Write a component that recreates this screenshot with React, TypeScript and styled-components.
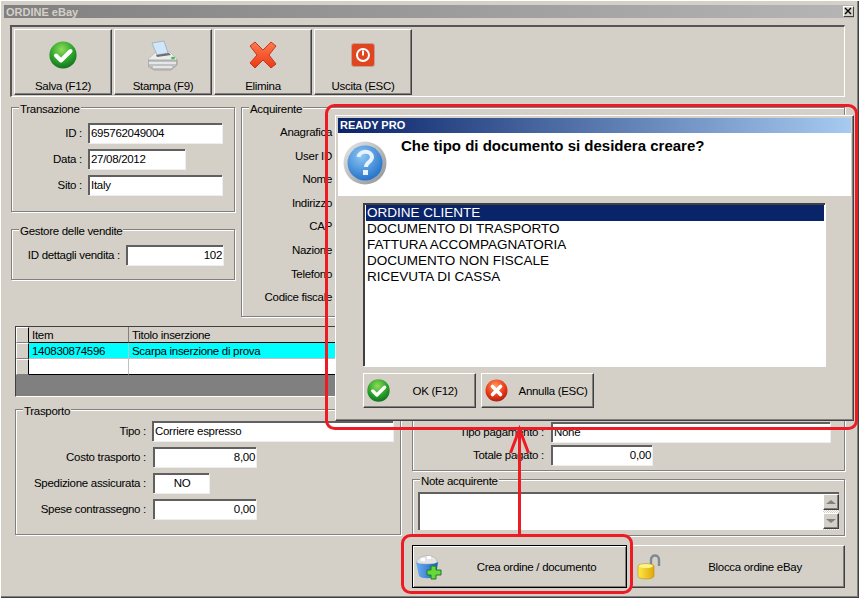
import React from 'react'
import styled, { createGlobalStyle } from 'styled-components'

const Global = createGlobalStyle`
  html, body { margin: 0; padding: 0; background: #d4d0c8; }
  * { box-sizing: border-box; }
`

const Window = styled.div`
  position: relative;
  width: 859px;
  height: 598px;
  overflow: hidden;
  padding: 5px 4px 0;
  background: #d4d0c8;
  color: #000;
  font-family: 'Liberation Sans', Arial, sans-serif;
  font-size: 11.5px;
  letter-spacing: -0.3px;
  box-shadow: inset 1px 1px 0 #fff, inset -1px -1px 0 #404040, inset -2px -2px 0 #808080;
`

const TitleBar = styled.div`
  display: flex;
  align-items: center;
  justify-content: space-between;
  height: 13px;
  width: 850px;
  padding: 0 1px 0 2px;
  background: linear-gradient(90deg, #808080, #b5b5b5);
  color: #d4d0c8;
  font-size: 11px;
  font-weight: bold;
  letter-spacing: 0;
`

const CloseBox = styled.div`
  display: flex;
  align-items: center;
  justify-content: center;
  width: 10px;
  height: 10px;
  margin-top: -2px;
  background: #d4d0c8;
  box-shadow: inset 1px 1px 0 #fff, 1px 1px 0 #404040;
`

const Body = styled.div`
  display: flex;
  flex-direction: column;
  width: 835px;
  margin: 7px 0 0 6px;
`

const Toolbar = styled.div`
  display: flex;
  gap: 2px;
  height: 72px;
  padding: 2px 2px 0 2px;
  border-top: 2px solid #555;
  border-left: 2px solid #555;
  border-right: 1px solid #fff;
  border-bottom: 1px solid #fff;
`

const raised = `
  background: #d4d0c8;
  border-top: 1px solid #fff;
  border-left: 1px solid #fff;
  border-right: 1px solid #404040;
  border-bottom: 1px solid #404040;
  box-shadow: inset -1px -1px 0 #808080;
`

const ToolButton = styled.div`
  ${raised}
  display: flex;
  flex-direction: column;
  align-items: center;
  width: 98px;
  height: 66px;
  padding-top: 9px;
  span { margin-top: 8px; line-height: 14px; }
`

const ToolIcon = styled.div`
  display: flex;
  align-items: center;
  justify-content: center;
  height: 32px;
`

const TopRow = styled.div`
  display: grid;
  grid-template-columns: 224px 1fr;
  gap: 6px;
  margin: 10px 0 0 1px;
`

const LeftStack = styled.div`
  display: flex;
  flex-direction: column;
  gap: 17px;
`

const Group = styled.div<{ $h: number }>`
  position: relative;
  display: flex;
  flex-direction: column;
  gap: 6px;
  height: ${p => p.$h}px;
  padding-top: 15px;
  border: 1px solid #808080;
  box-shadow: 1px 1px 0 #fff, inset 1px 1px 0 #fff;
`

const Legend = styled.span`
  position: absolute;
  top: -5px;
  left: 7px;
  padding: 0 1px;
  background: #d4d0c8;
  line-height: 12px;
`

const Row = styled.div<{ $up?: number }>`
  display: flex;
  align-items: center;
  height: 20px;
  margin-top: ${p => p.$up || 0}px;
`

const Label = styled.div<{ $w: number; $pad?: number }>`
  flex: none;
  width: ${p => p.$w}px;
  padding-right: ${p => p.$pad || 6}px;
  text-align: right;
  white-space: nowrap;
`

const Input = styled.div<{ $w: number; $align?: string }>`
  flex: none;
  width: ${p => p.$w}px;
  height: 20px;
  padding: 0 1px;
  line-height: 16px;
  text-align: ${p => p.$align || 'left'};
  background: #fff;
  border-top: 2px solid #606060;
  border-left: 2px solid #606060;
  box-shadow: 1px 1px 0 #eee;
`

const BuyerRows = styled.div`
  display: flex;
  flex-direction: column;
  gap: 9.6px;
  margin-top: 2px;
`

const BuyerLabel = styled.div`
  width: 90px;
  height: 14px;
  line-height: 14px;
  text-align: right;
  white-space: nowrap;
`

const DataGrid = styled.div`
  display: grid;
  grid-template-columns: 13px 100px 1fr;
  grid-auto-rows: 16px;
  height: 71px;
  margin: 9px 0 0 5px;
  border: 1px solid #404040;
  border-bottom-color: #fff;
  background: #808080;
`

const Cell = styled.div<{ $bg?: string; $line?: string }>`
  padding: 0 3px;
  line-height: 16px;
  background: ${p => p.$bg || '#fff'};
  border-right: 1px solid ${p => (p.$bg === '#d4d0c8' ? '#808080' : '#c0c0c0')};
  border-bottom: 1px solid ${p => p.$line || '#000'};
  white-space: nowrap;
`

const Indicator = styled.div`
  ${raised}
  border-right-color: #000;
  border-bottom-color: #808080;
  box-shadow: none;
`

const BottomRow = styled.div`
  display: grid;
  grid-template-columns: 386px 433px;
  gap: 11px;
  margin: 12px 0 0 5px;
`

const RightStack = styled.div`
  display: flex;
  flex-direction: column;
`

const PayGroup = styled(Group)`
  padding-top: 12px;
  gap: 3px;
`

const NoteGroup = styled(Group)`
  margin-top: 8px;
  padding: 12px 5px 0;
`

const NoteBox = styled.div`
  display: flex;
  justify-content: flex-end;
  height: 38px;
  background: #fff;
  border-top: 2px solid #606060;
  border-left: 2px solid #606060;
`

const Spin = styled.div`
  display: flex;
  flex-direction: column;
  justify-content: space-between;
  width: 16px;
  padding-bottom: 1px;
  background: repeating-conic-gradient(#d4d0c8 0 25%, #fff 0 50%) 0 0 / 2px 2px;
`

const SpinButton = styled.div`
  ${raised}
  display: flex;
  align-items: center;
  justify-content: center;
  height: 16px;
`

const Arrow = styled.div<{ $up?: boolean }>`
  width: 0;
  height: 0;
  border-left: 5px solid transparent;
  border-right: 5px solid transparent;
  ${p => (p.$up ? 'border-bottom: 4px solid #808080;' : 'border-top: 4px solid #808080;')}
`

const ActionRow = styled.div`
  display: flex;
  gap: 3px;
  margin-top: 9px;
`

const WideButton = styled.div<{ $pressed?: boolean }>`
  ${raised}
  ${p => (p.$pressed ? 'border: 1px solid #000; box-shadow: inset 1px 1px 0 #fff, inset -1px -1px 0 #808080;' : '')}
  display: flex;
  align-items: center;
  width: 215px;
  height: 43px;
  padding-left: ${p => (p.$pressed ? 3 : 6)}px;
  svg { flex: none; }
  span { flex: 1; padding-left: 5px; text-align: center; }
`

const Dialog = styled.div`
  position: absolute;
  left: 335px;
  top: 115px;
  width: 519px;
  height: 306px;
  padding: 2px;
  background: #d4d0c8;
  border-top: 1px solid #fff;
  border-left: 1px solid #fff;
  border-right: 1px solid #404040;
  border-bottom: 1px solid #404040;
  box-shadow: inset -1px -1px 0 #808080;
  z-index: 2;
`

const DialogTitle = styled.div`
  height: 15px;
  padding-left: 2px;
  line-height: 15px;
  color: #fff;
  font-size: 11px;
  font-weight: bold;
  letter-spacing: 0;
  background: linear-gradient(90deg, #0a246a, #a6caf0);
`

const DialogHead = styled.div`
  display: flex;
  align-items: flex-start;
  gap: 14px;
  height: 63px;
  padding: 8px 0 0 5px;
  background: #fff;
`

const DialogQuestion = styled.div`
  margin-top: -4px;
  font-size: 15px;
  font-weight: bold;
  letter-spacing: 0;
  line-height: 18px;
`

const DialogBody = styled.div`
  padding: 7px 28px 0 25px;
`

const ListBox = styled.div`
  width: 462px;
  height: 163px;
  padding: 0 1px;
  background: #fff;
  border-top: 2px solid #404040;
  border-left: 2px solid #404040;
  box-shadow: 1px 1px 0 #fff;
`

const ListItem = styled.div<{ $active?: boolean }>`
  height: 16px;
  padding-left: 1px;
  line-height: 16px;
  font-size: 13.5px;
  letter-spacing: 0;
  color: ${p => (p.$active ? '#fff' : '#000')};
  background: ${p => (p.$active ? '#0a246a' : 'transparent')};
`

const DialogActions = styled.div`
  display: flex;
  gap: 5px;
  margin-top: 7px;
`

const DialogButton = styled.div`
  ${raised}
  display: flex;
  align-items: center;
  width: 113px;
  height: 35px;
  padding-left: 3px;
  svg { flex: none; }
  span { flex: 1; padding-left: 5px; text-align: center; white-space: nowrap; }
`

const Marks = styled.svg`
  position: absolute;
  left: 0;
  top: 0;
  z-index: 3;
  pointer-events: none;
`

const CheckIcon = ({ size, id }: { size: number; id: string }) => (
  <svg width={size} height={size} viewBox="0 0 28 28">
    <defs>
      <radialGradient id={id} cx="45%" cy="30%" r="75%">
        <stop offset="0" stopColor="#8fdc5a" />
        <stop offset="0.55" stopColor="#2fa52c" />
        <stop offset="1" stopColor="#0c6a1e" />
      </radialGradient>
    </defs>
    <circle cx="14" cy="14" r="13.6" fill={`url(#${id})`} />
    <path d="M7 14.5l5 5 9.5-9.5" fill="none" stroke="#fff" strokeWidth="4" strokeLinecap="round" strokeLinejoin="round" />
  </svg>
)

const PrinterIcon = () => (
  <svg width="30" height="31" viewBox="0 0 30 31">
    <path d="M0 19L8 12H22L29 19V24H0z" fill="#ececec" stroke="#a8a8a8" strokeWidth=".6" />
    <path d="M4 3L16 1 20 13 9 15z" fill="#cfe6fb" stroke="#8ea6bc" strokeWidth=".7" />
    <path d="M8 15L21 13 23 15 9 17z" fill="#6e6e6e" />
    <path d="M0 20H29V25L23 30H6L0 26z" fill="#bfc1c3" stroke="#8a8a8a" strokeWidth=".6" />
    <path d="M1 23H28M5 27H24" stroke="#f2f2f2" strokeWidth="1.3" />
    <ellipse cx="25" cy="18" rx="2" ry="1.2" fill="#3fbf46" />
  </svg>
)

const CrossIcon = () => (
  <svg width="28" height="28" viewBox="0 0 28 28">
    <defs>
      <linearGradient id="crossFill" x1="0" y1="0" x2="0" y2="1">
        <stop offset="0" stopColor="#ff7a50" />
        <stop offset="1" stopColor="#ea3a14" />
      </linearGradient>
    </defs>
    <path d="M1 5L6 1 14 9 22 1 27 5 20 14 27 23 22 27 14 19 6 27 1 22 8 14z" fill="url(#crossFill)" stroke="#c22c10" strokeWidth=".9" strokeLinejoin="round" />
  </svg>
)

const PowerIcon = () => (
  <svg width="24" height="24" viewBox="0 0 24 24">
    <rect x=".5" y=".5" width="23" height="23" rx="2.500" fill="#e04522" stroke="#c9a090" />
    <circle cx="12" cy="12" r="6" fill="none" stroke="#fff" strokeWidth="2" />
    <path d="M12 7.500v5" stroke="#fff" strokeWidth="2" />
  </svg>
)

const CancelIcon = () => (
  <svg width="23" height="23" viewBox="0 0 23 23">
    <defs>
      <radialGradient id="cancelFill" cx="45%" cy="30%" r="75%">
        <stop offset="0" stopColor="#ff9a5a" />
        <stop offset="0.6" stopColor="#e8391a" />
        <stop offset="1" stopColor="#a81a08" />
      </radialGradient>
    </defs>
    <circle cx="11.5" cy="11.5" r="11" fill="url(#cancelFill)" />
    <path d="M7.500 7.500l8 8M15.500 7.500l-8 8" stroke="#fff" strokeWidth="3.6" strokeLinecap="round" />
  </svg>
)

const BasketIcon = () => (
  <svg width="26" height="26" viewBox="0 0 26 26">
    <defs>
      <linearGradient id="basketFill" x1="0" y1="0" x2="1" y2="0">
        <stop offset="0" stopColor="#6cb0f0" />
        <stop offset="1" stopColor="#1c5cc0" />
      </linearGradient>
    </defs>
    <path d="M1 7C2 1 19 -1 21 7L21 10H1z" fill="#e4e4e4" stroke="#a8a8a8" strokeWidth=".6" />
    <path d="M5 4h4v3H5zM11 2h4v3h-4z" fill="#fff" />
    <path d="M0 8C4 11 18 11 22 8L20 22C16 25 6 25 3 22z" fill="url(#basketFill)" />
    <path d="M15 12h5v4h5v5h-5v4h-5v-4h-4v-5h4z" fill="#66d83c" stroke="#1f7a20" strokeWidth="1" />
  </svg>
)

const LockIcon = () => (
  <svg width="24" height="26" viewBox="0 0 24 26">
    <defs>
      <linearGradient id="lockFill" x1="0" y1="0" x2="1" y2="0">
        <stop offset="0" stopColor="#ffe94a" />
        <stop offset="1" stopColor="#e0a808" />
      </linearGradient>
    </defs>
    <path d="M14 11V6c0-6 8-6 8 0v6" fill="none" stroke="#808890" strokeWidth="2.4" />
    <path d="M1 12c0-3 16-3 16 0v10c0 4-16 4-16 0z" fill="url(#lockFill)" stroke="#b89010" strokeWidth=".6" />
    <ellipse cx="9" cy="12" rx="7" ry="2" fill="#fff48a" />
  </svg>
)

const QuestionIcon = () => (
  <svg width="44" height="44" viewBox="0 0 44 44">
    <defs>
      <radialGradient id="qFill" cx="40%" cy="30%" r="75%">
        <stop offset="0" stopColor="#8cc6f4" />
        <stop offset="1" stopColor="#1f6fc8" />
      </radialGradient>
      <linearGradient id="qRim" x1="0" y1="0" x2="1" y2="1">
        <stop offset="0" stopColor="#e8e8e8" />
        <stop offset="1" stopColor="#8c9096" />
      </linearGradient>
    </defs>
    <circle cx="22" cy="22" r="21.5" fill="url(#qRim)" />
    <circle cx="22" cy="22" r="17.5" fill="url(#qFill)" />
    <path d="M15.500 16c1-7 13-7 13.500 0 0 5-6 5-6 10" fill="none" stroke="#e8f2fa" strokeWidth="4" />
    <rect x="20" y="29" width="5" height="5" fill="#e8f2fa" />
  </svg>
)

const buyerLabels = ['Anagrafica', 'User ID', 'Nome', 'Indirizzo', 'CAP', 'Nazione', 'Telefono', 'Codice fiscale']
const docTypes = [
  'ORDINE CLIENTE',
  'DOCUMENTO DI TRASPORTO',
  'FATTURA ACCOMPAGNATORIA',
  'DOCUMENTO NON FISCALE',
  'RICEVUTA DI CASSA',
]

export default function App() {
  return (
    <>
      <Global />
      <Window>
        <TitleBar>
          ORDINE eBay
          <CloseBox>
            <svg width="8" height="8" viewBox="0 0 8 8">
              <path d="M1 1l6 6M7 1l-6 6" stroke="#000" strokeWidth="1.4" />
            </svg>
          </CloseBox>
        </TitleBar>
        <Body>
          <Toolbar>
            <ToolButton>
              <ToolIcon>
                <CheckIcon size={28} id="saveFill" />
              </ToolIcon>
              <span>Salva (F12)</span>
            </ToolButton>
            <ToolButton>
              <ToolIcon>
                <PrinterIcon />
              </ToolIcon>
              <span>Stampa (F9)</span>
            </ToolButton>
            <ToolButton>
              <ToolIcon>
                <CrossIcon />
              </ToolIcon>
              <span>Elimina</span>
            </ToolButton>
            <ToolButton>
              <ToolIcon>
                <PowerIcon />
              </ToolIcon>
              <span>Uscita (ESC)</span>
            </ToolButton>
          </Toolbar>

          <TopRow>
            <LeftStack>
              <Group $h={105}>
                <Legend>Transazione</Legend>
                <Row>
                  <Label $w={76}>ID :</Label>
                  <Input $w={134}>695762049004</Input>
                </Row>
                <Row>
                  <Label $w={76}>Data :</Label>
                  <Input $w={97}>27/08/2012</Input>
                </Row>
                <Row>
                  <Label $w={76}>Sito :</Label>
                  <Input $w={134}>Italy</Input>
                </Row>
              </Group>
              <Group $h={51}>
                <Legend>Gestore delle vendite</Legend>
                <Row>
                  <Label $w={114}>ID dettagli vendita :</Label>
                  <Input $w={97} $align="right">102</Input>
                </Row>
              </Group>
            </LeftStack>
            <Group $h={210}>
              <Legend>Acquirente</Legend>
              <BuyerRows>
                {buyerLabels.map(l => (
                  <BuyerLabel key={l}>{l}</BuyerLabel>
                ))}
              </BuyerRows>
            </Group>
          </TopRow>

          <DataGrid>
            <Indicator />
            <Cell $bg="#d4d0c8">Item</Cell>
            <Cell $bg="#d4d0c8">Titolo inserzione</Cell>
            <Indicator />
            <Cell $bg="#00ffff" $line="#c0c0c0">140830874596</Cell>
            <Cell $bg="#00ffff" $line="#c0c0c0">Scarpa inserzione di prova</Cell>
            <Indicator />
            <Cell />
            <Cell />
          </DataGrid>

          <BottomRow>
            <Group $h={126}>
              <Legend>Trasporto</Legend>
              <Row $up={-4}>
                <Label $w={136}>Tipo :</Label>
                <Input $w={241}>Corriere espresso</Input>
              </Row>
              <Row>
                <Label $w={137} $pad={7}>Costo trasporto :</Label>
                <Input $w={103} $align="right">8,00</Input>
              </Row>
              <Row>
                <Label $w={137} $pad={7}>Spedizione assicurata :</Label>
                <Input $w={56} $align="center">NO</Input>
              </Row>
              <Row>
                <Label $w={137} $pad={7}>Spese contrassegno :</Label>
                <Input $w={103} $align="right">0,00</Input>
              </Row>
            </Group>
            <RightStack>
              <PayGroup $h={62}>
                <Row>
                  <Label $w={138} $pad={7}>Tipo pagamento :</Label>
                  <Input $w={279}>None</Input>
                </Row>
                <Row>
                  <Label $w={138} $pad={7}>Totale pagato :</Label>
                  <Input $w={101} $align="right">0,00</Input>
                </Row>
              </PayGroup>
              <NoteGroup $h={57}>
                <Legend>Note acquirente</Legend>
                <NoteBox>
                  <Spin>
                    <SpinButton>
                      <Arrow $up />
                    </SpinButton>
                    <SpinButton>
                      <Arrow />
                    </SpinButton>
                  </Spin>
                </NoteBox>
              </NoteGroup>
              <ActionRow>
                <WideButton $pressed>
                  <BasketIcon />
                  <span>Crea ordine / documento</span>
                </WideButton>
                <WideButton>
                  <LockIcon />
                  <span>Blocca ordine eBay</span>
                </WideButton>
              </ActionRow>
            </RightStack>
          </BottomRow>
        </Body>

        <Dialog>
          <DialogTitle>READY PRO</DialogTitle>
          <DialogHead>
            <QuestionIcon />
            <DialogQuestion>Che tipo di documento si desidera creare?</DialogQuestion>
          </DialogHead>
          <DialogBody>
            <ListBox>
              {docTypes.map((d, i) => (
                <ListItem key={d} $active={i === 0}>
                  {d}
                </ListItem>
              ))}
            </ListBox>
            <DialogActions>
              <DialogButton>
                <CheckIcon size={23} id="okFill" />
                <span>OK (F12)</span>
              </DialogButton>
              <DialogButton>
                <CancelIcon />
                <span>Annulla (ESC)</span>
              </DialogButton>
            </DialogActions>
          </DialogBody>
        </Dialog>

        <Marks width="859" height="598" viewBox="0 0 859 598">
          <g fill="none" stroke="#ed1c24" strokeWidth="3">
            <rect x="326.500" y="105.500" width="530" height="323" rx="8" />
            <rect x="402.500" y="535.500" width="229" height="57" rx="8" />
            <path d="M519.500 535V430M510.500 453l9-24 9 24" />
          </g>
        </Marks>
      </Window>
    </>
  )
}
